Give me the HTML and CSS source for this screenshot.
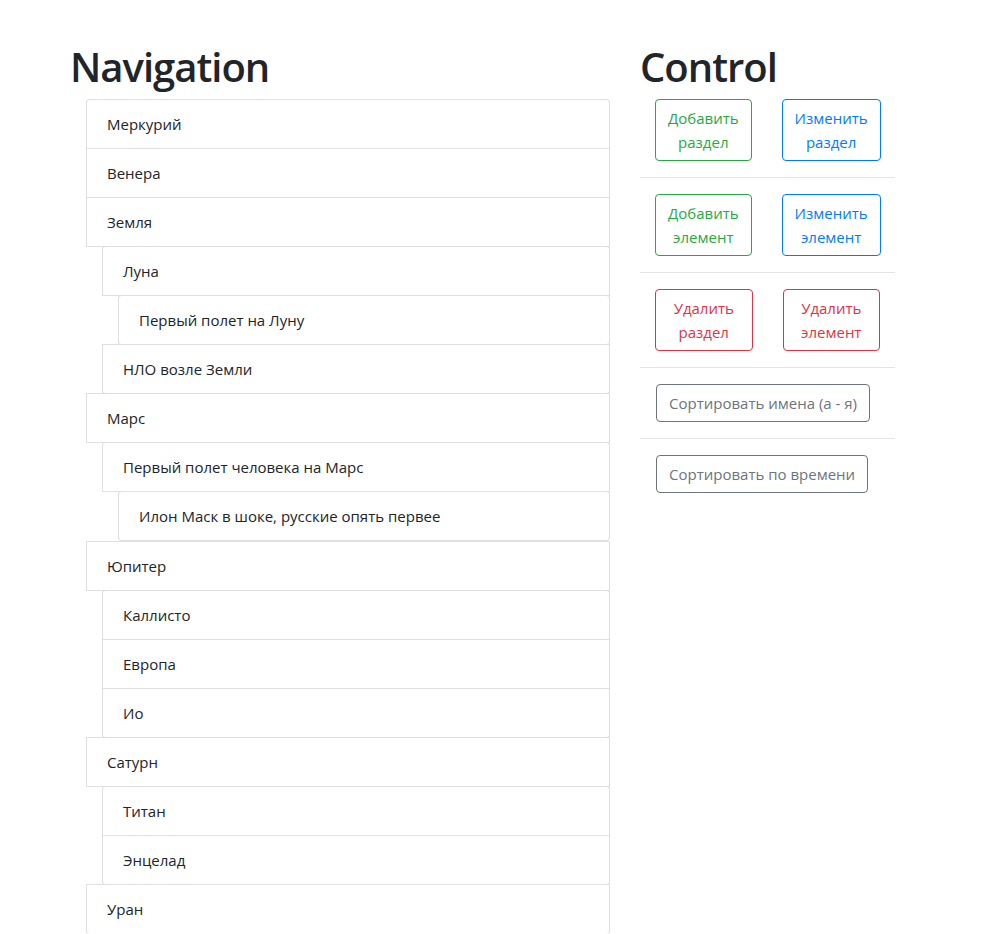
FILE: index.html
```html
<!DOCTYPE html>
<html lang="ru">
<head>
<meta charset="utf-8">
<title>Navigation</title>
<link rel="stylesheet" href="styles.css">
</head>
<body>
<div class="page">
  <section class="nav-col">
    <h1 class="title">Navigation</h1>
    <div class="list-group root">
      <div class="item">Меркурий</div>
      <div class="item">Венера</div>
      <div class="item">Земля</div>
      <div class="list-group nested">
        <div class="item">Луна</div>
        <div class="list-group nested">
          <div class="item">Первый полет на Луну</div>
        </div>
        <div class="item">НЛО возле Земли</div>
      </div>
      <div class="item">Марс</div>
      <div class="list-group nested">
        <div class="item">Первый полет человека на Марс</div>
        <div class="list-group nested">
          <div class="item">Илон Маск в шоке, русские опять первее</div>
        </div>
      </div>
      <div class="item">Юпитер</div>
      <div class="list-group nested">
        <div class="item">Каллисто</div>
        <div class="item">Европа</div>
        <div class="item">Ио</div>
      </div>
      <div class="item">Сатурн</div>
      <div class="list-group nested">
        <div class="item">Титан</div>
        <div class="item">Энцелад</div>
      </div>
      <div class="item">Уран</div>
    </div>
  </section>
  <section class="control-col">
    <h1 class="title">Control</h1>
    <div class="btn-pair">
      <button class="btn btn-success">Добавить раздел</button>
      <button class="btn btn-primary">Изменить раздел</button>
    </div>
    <hr class="sep">
    <div class="btn-pair">
      <button class="btn btn-success">Добавить элемент</button>
      <button class="btn btn-primary">Изменить элемент</button>
    </div>
    <hr class="sep">
    <div class="btn-pair">
      <button class="btn btn-danger">Удалить раздел</button>
      <button class="btn btn-danger">Удалить элемент</button>
    </div>
    <hr class="sep">
    <div class="btn-single">
      <button class="btn btn-secondary">Сортировать имена (а - я)</button>
    </div>
    <hr class="sep">
    <div class="btn-single">
      <button class="btn btn-secondary">Сортировать по времени</button>
    </div>
  </section>
</div>
</body>
</html>
```

FILE: styles.css
```css
* { box-sizing: border-box; }

html, body {
  margin: 0;
  padding: 0;
  background: #fff;
}

body {
  font-family: "Open Sans", "Noto Sans", "Liberation Sans", sans-serif;
  font-size: 15px;
  line-height: 24px;
  color: #212529;
}

.page {
  display: grid;
  grid-template-columns: 540px 255px;
  column-gap: 30px;
  padding: 43px 0 0 70px;
}

.title {
  margin: 0 0 8px 0;
  font-size: 40px;
  line-height: 48px;
  font-weight: 600;
  letter-spacing: -1px;
  color: #212529;
}

.list-group {
  display: flex;
  flex-direction: column;
}

.root {
  margin-left: 16px;
}

.nested {
  margin-left: 16px;
}

.nested > .nested:last-child {
  margin-bottom: 1px;
}

.item {
  border: 1px solid rgba(0, 0, 0, 0.125);
  padding: 12px 20px;
  margin-bottom: -1px;
  background: #fff;
}

.list-group > .item:first-child {
  border-top-left-radius: 4px;
  border-top-right-radius: 4px;
}

.list-group > .item:last-child {
  border-bottom-left-radius: 4px;
  border-bottom-right-radius: 4px;
}

.btn-pair {
  display: grid;
  grid-template-columns: 1fr 1fr;
}

.btn-pair .btn {
  margin: 0 15px;
  width: calc(100% - 30px);
}

.btn-single {
  padding-left: 16px;
}

.btn {
  font-family: inherit;
  font-size: 15px;
  line-height: 24px;
  padding: 6px 12px;
  background: transparent;
  border: 1px solid;
  border-radius: 4px;
  text-align: center;
}

.btn-success { color: #28a745; border-color: #28a745; }
.btn-primary { color: #007bff; border-color: #007bff; }
.btn-danger { color: #dc3545; border-color: #dc3545; }
.btn-secondary { color: #6c757d; border-color: #6c757d; }

.sep {
  margin: 16px 0;
  border: 0;
  border-top: 1px solid rgba(0, 0, 0, 0.1);
}
```
